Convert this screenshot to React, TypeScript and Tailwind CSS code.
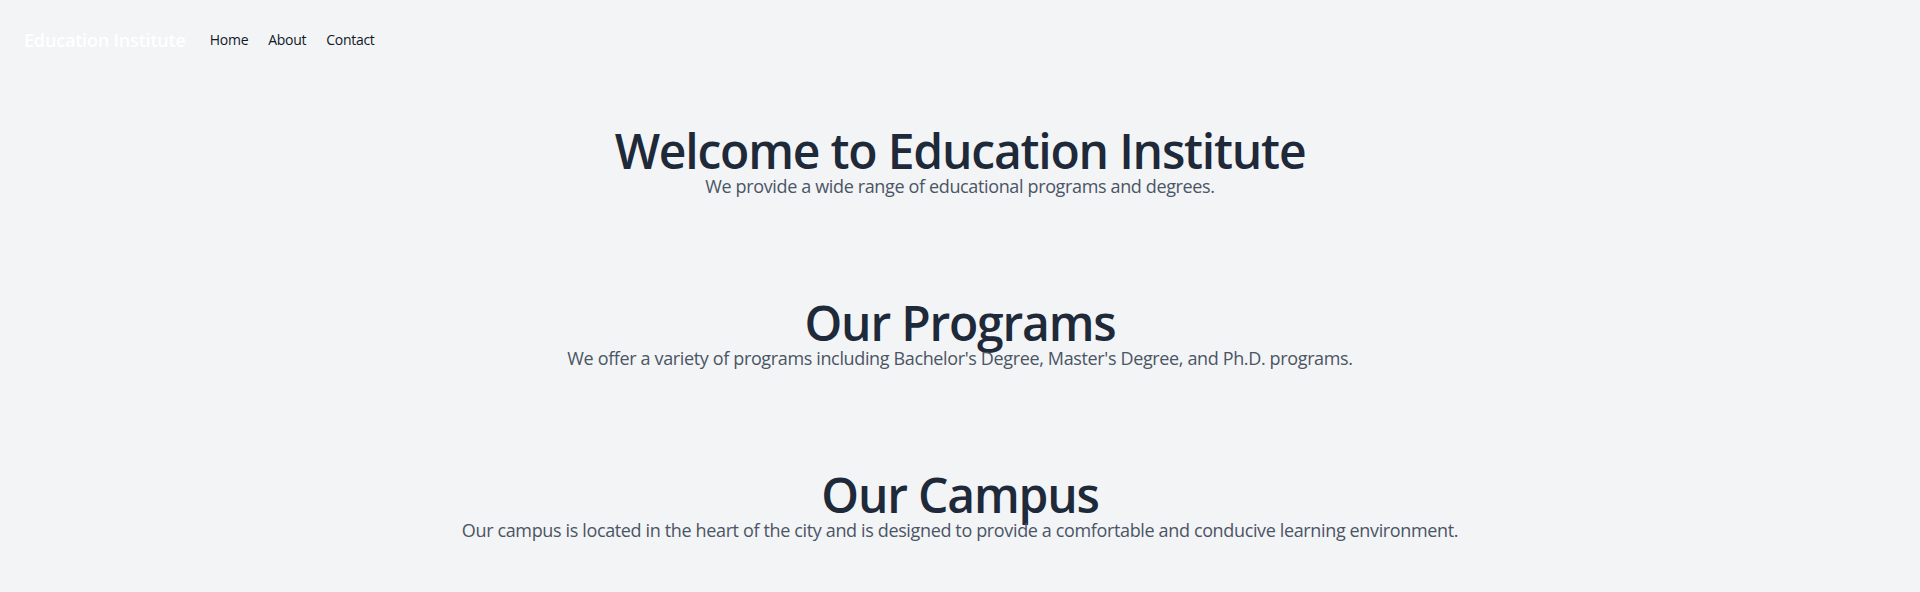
const sections = [
  {
    title: "Welcome to Education Institute",
    text: "We provide a wide range of educational programs and degrees.",
  },
  {
    title: "Our Programs",
    text: "We offer a variety of programs including Bachelor's Degree, Master's Degree, and Ph.D. programs.",
  },
  {
    title: "Our Campus",
    text: "Our campus is located in the heart of the city and is designed to provide a comfortable and conducive learning environment.",
  },
];

const App = () => {
  return (
    <div
      className="min-h-screen w-full bg-gray-100"
      style={{ fontFamily: '"Open Sans", "Noto Sans", sans-serif' }}
    >
      <nav className="flex h-20 flex-row items-center px-6">
        <span className="mr-6 text-lg font-semibold tracking-[-0.01em] text-white">
          Education Institute
        </span>
        <ul className="flex flex-row gap-5 text-sm tracking-[-0.02em] text-gray-900">
          <li>Home</li>
          <li>About</li>
          <li>Contact</li>
        </ul>
      </nav>
      {sections.map((s) => (
        <section key={s.title} className="pt-[47px] pb-[49px] text-center">
          <h2 className="text-5xl font-semibold tracking-[-0.025em] text-gray-800">
            {s.title}
          </h2>
          <p className="-mt-[3px] mb-[3px] text-lg tracking-[-0.02em] text-gray-600">
            {s.text}
          </p>
        </section>
      ))}
    </div>
  );
};
export default App;
